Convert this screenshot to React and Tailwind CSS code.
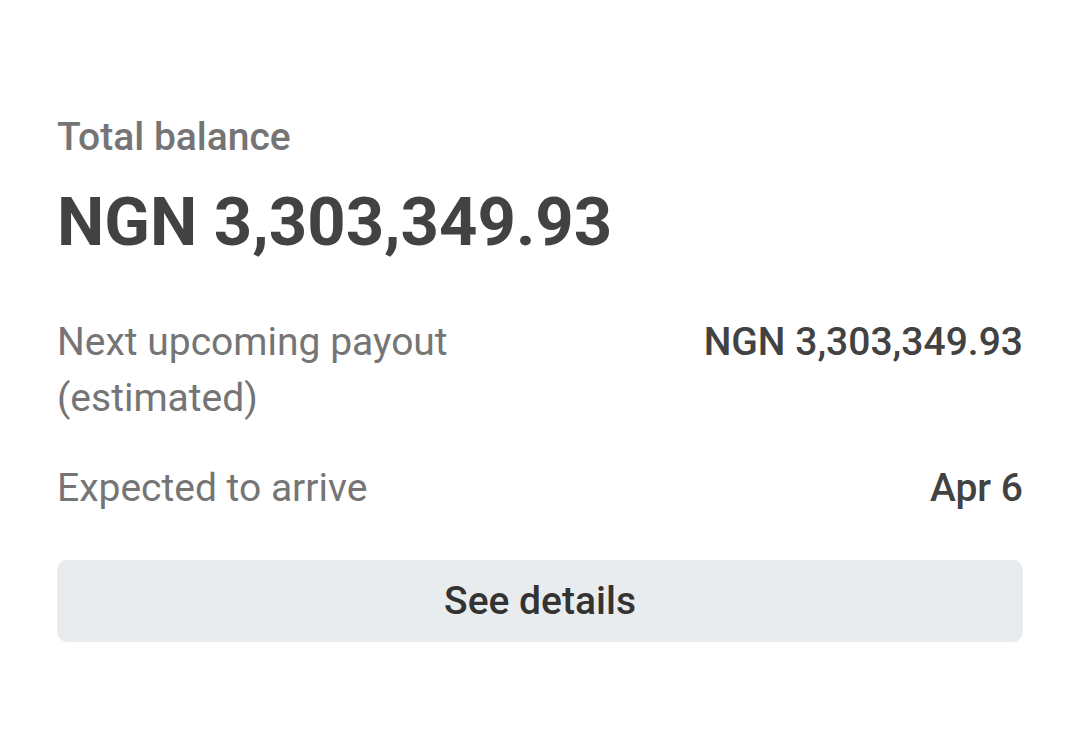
export default function App() {
  return (
    <div
      className="w-[1080px] h-[732px] bg-white px-[57px] pt-[115px]"
      style={{ fontFamily: "Roboto, 'Liberation Sans', sans-serif" }}
    >
      <div className="text-[39px] leading-[44px] font-medium text-[#757575]">Total balance</div>
      <div className="mt-[25px] text-[67px] leading-[76px] font-bold text-[#424242]">NGN 3,303,349.93</div>

      <div className="mt-[54px] flex justify-between items-start">
        <div className="w-[480px] text-[39px] leading-[56px] text-[#757575]">
          Next upcoming payout (estimated)
        </div>
        <div className="text-[39px] leading-[56px] font-medium text-[#424242]">NGN 3,303,349.93</div>
      </div>

      <div className="mt-[34px] flex justify-between items-start">
        <div className="text-[39px] leading-[56px] text-[#757575]">Expected to arrive</div>
        <div className="text-[39px] leading-[56px] font-medium text-[#424242]">Apr 6</div>
      </div>

      <button className="mt-[44px] w-full h-[82px] rounded-[10px] bg-[#e9ecef] flex items-center justify-center text-[39px] font-medium text-[#333333]">
        See details
      </button>
    </div>
  );
}
